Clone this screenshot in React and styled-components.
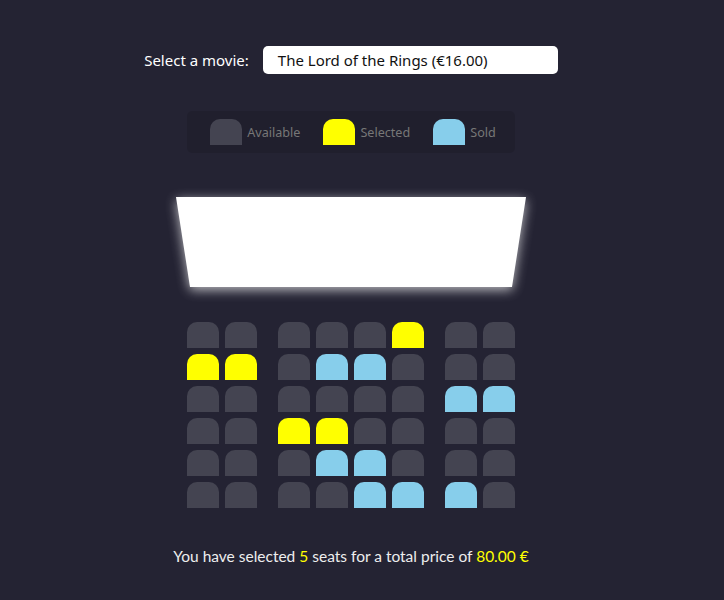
import React from 'react';
import styled, { createGlobalStyle } from 'styled-components';

const GlobalStyle = createGlobalStyle`
  html, body {
    margin: 0;
    padding: 0;
    background-color: #242333;
  }
  body {
    color: #fff;
    font-family: 'Lato', sans-serif;
  }
`;

const Page = styled.div`
  width: 702px;
  height: 600px;
  display: flex;
  flex-direction: column;
  align-items: center;
  box-sizing: border-box;
  padding-top: 46px;
`;

const MovieRow = styled.div`
  display: flex;
  align-items: center;
  gap: 14px;
  height: 28px;
`;

const Label = styled.label`
  font-family: 'Noto Sans', sans-serif;
  font-size: 15px;
  color: #fff;
`;

const Select = styled.div`
  width: 295px;
  height: 28px;
  box-sizing: border-box;
  background-color: #fff;
  border-radius: 5px;
  padding: 0 15px;
  display: flex;
  align-items: center;
  font-family: 'Noto Sans', sans-serif;
  font-size: 15px;
  color: #111;
`;

const Showcase = styled.ul`
  list-style: none;
  margin: 37px 0 0;
  padding: 8px 0 8px 4px;
  width: 328px;
  box-sizing: border-box;
  display: flex;
  justify-content: center;
  gap: 23px;
  background: rgba(0, 0, 0, 0.1);
  border-radius: 5px;
  color: #777;
`;

const ShowItem = styled.li`
  display: flex;
  align-items: center;
  gap: 5px;
`;

const Small = styled.small`
  font-family: 'Noto Sans', sans-serif;
  font-size: 12.6px;
`;

const seatColors = {
  A: '#444451',
  Y: '#ffff00',
  B: '#87ceeb',
};

const Seat = styled.div`
  width: 32px;
  height: 26px;
  background-color: ${p => seatColors[p.$kind]};
  border-top-left-radius: 10px;
  border-top-right-radius: 10px;
`;

const ScreenGlow = styled.div`
  margin-top: 44px;
  filter: drop-shadow(0 3px 6px rgba(255, 255, 255, 0.7));
`;

const Screen = styled.div`
  width: 350px;
  height: 90px;
  background-color: #fff;
  clip-path: polygon(0 0, 100% 0, 336px 100%, 14px 100%);
`;

const Grid = styled.div`
  margin-top: 35px;
  display: flex;
  flex-direction: column;
  gap: 6px;
`;

const Row = styled.div`
  display: flex;
  gap: 6px;
`;

const Aisle = styled.div`
  width: 9px;
`;

const Text = styled.p`
  margin: 39px 0 0;
  font-size: 15.5px;
  color: #eee;
`;

const Hl = styled.span`
  color: #ffff00;
`;

const rows = [
  'AA AAAY AA',
  'YY ABBA AA',
  'AA AAAA BB',
  'AA YYAA AA',
  'AA ABBA AA',
  'AA AABB BA',
];

export default function App() {
  return (
    <>
      <GlobalStyle />
      <Page>
        <MovieRow>
          <Label>Select a movie:</Label>
          <Select>The Lord of the Rings (€16.00)</Select>
        </MovieRow>

        <Showcase>
          <ShowItem>
            <Seat $kind="A" />
            <Small>Available</Small>
          </ShowItem>
          <ShowItem>
            <Seat $kind="Y" />
            <Small>Selected</Small>
          </ShowItem>
          <ShowItem>
            <Seat $kind="B" />
            <Small>Sold</Small>
          </ShowItem>
        </Showcase>

        <ScreenGlow>
          <Screen />
        </ScreenGlow>

        <Grid>
          {rows.map((r, i) => (
            <Row key={i}>
              {r.split('').map((c, j) =>
                c === ' ' ? <Aisle key={j} /> : <Seat key={j} $kind={c} />
              )}
            </Row>
          ))}
        </Grid>

        <Text>
          You have selected <Hl>5</Hl> seats for a total price of <Hl>80.00 €</Hl>
        </Text>
      </Page>
    </>
  );
}
